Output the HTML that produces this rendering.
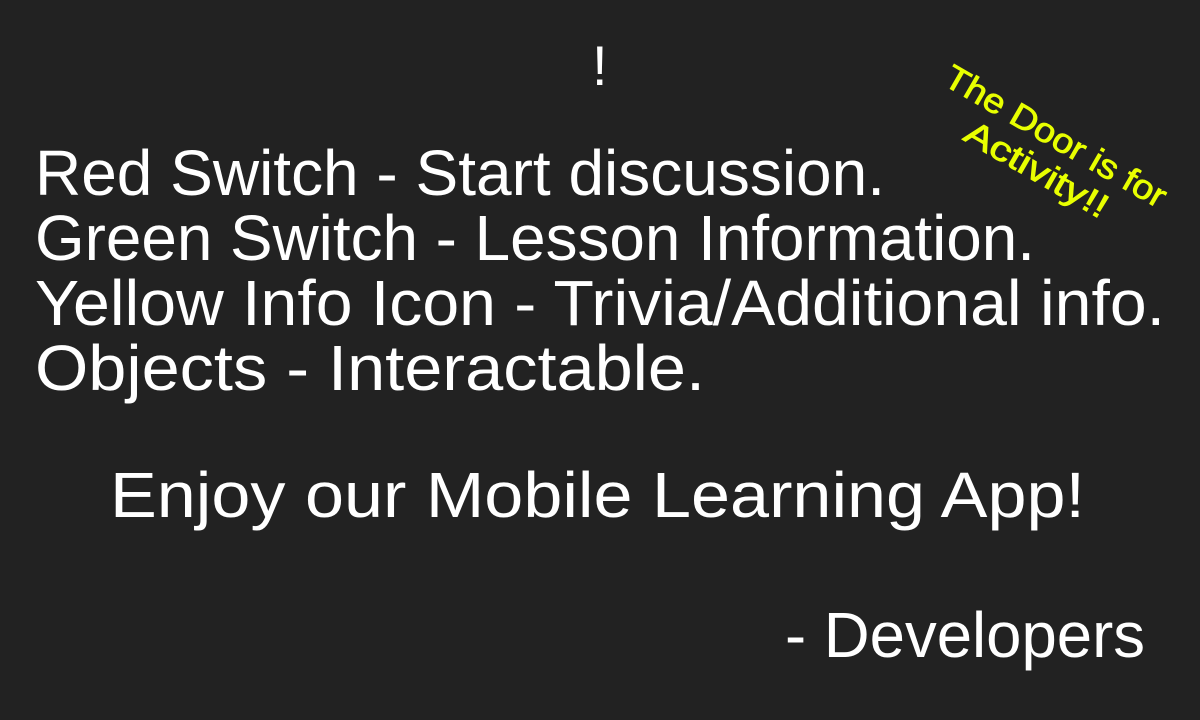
<!DOCTYPE html>
<html><head><meta charset="utf-8"><style>
html,body{margin:0;padding:0;background:#222222;width:1200px;height:720px;overflow:hidden}
svg{display:block}
text{font-family:"Liberation Sans",sans-serif;fill:#fff}
</style></head><body>
<svg width="1200" height="720" viewBox="0 0 1200 720">
<rect width="1200" height="720" fill="#222222"/>
<text x="592" y="85" font-size="56">!</text>
<text x="35" y="195" font-size="64" textLength="850" lengthAdjust="spacingAndGlyphs">Red Switch - Start discussion.</text>
<text x="35" y="260" font-size="64" textLength="1000" lengthAdjust="spacingAndGlyphs">Green Switch - Lesson Information.</text>
<text x="35" y="325" font-size="64" textLength="1130" lengthAdjust="spacingAndGlyphs">Yellow Info Icon - Trivia/Additional info.</text>
<text x="35" y="390" font-size="64" textLength="670" lengthAdjust="spacingAndGlyphs">Objects - Interactable.</text>
<text x="110" y="517" font-size="64" textLength="975" lengthAdjust="spacingAndGlyphs">Enjoy our Mobile Learning App!</text>
<text x="785" y="657" font-size="64" textLength="360" lengthAdjust="spacingAndGlyphs">- Developers</text>
<g transform="translate(1045,155) rotate(30)">
<text x="0" y="-10" font-size="34" text-anchor="middle" textLength="250" lengthAdjust="spacingAndGlyphs" style="fill:#e8ff00;stroke:#e8ff00;stroke-width:0.8">The Door is for</text>
<text x="0" y="28" font-size="34" text-anchor="middle" textLength="160" lengthAdjust="spacingAndGlyphs" style="fill:#e8ff00;stroke:#e8ff00;stroke-width:0.8">Activity!!</text>
</g>
</svg>
</body></html>
